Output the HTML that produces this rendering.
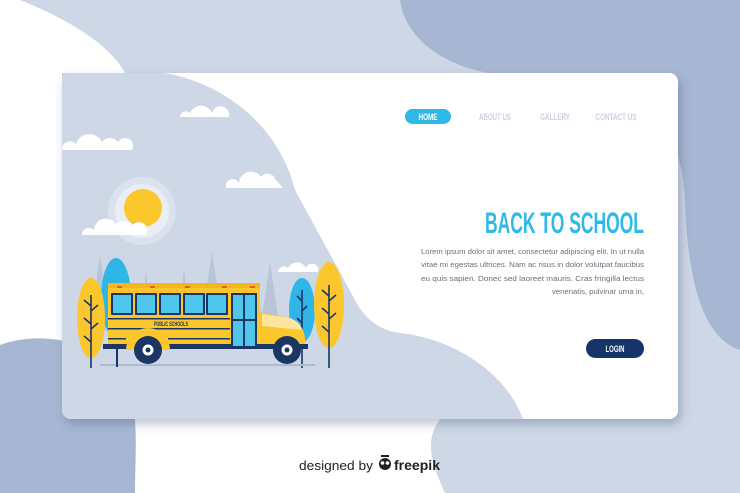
<!DOCTYPE html>
<html><head><meta charset="utf-8"><style>
html,body{margin:0;padding:0;width:740px;height:493px;overflow:hidden;background:#fff}
svg{display:block}
</style></head><body>
<svg width="740" height="493" viewBox="0 0 740 493" xmlns="http://www.w3.org/2000/svg">
<defs>
<filter id="sh" x="-10%" y="-10%" width="120%" height="130%"><feDropShadow dx="3" dy="5" stdDeviation="5" flood-color="#44557a" flood-opacity="0.35"/></filter>
<clipPath id="cc"><rect x="62" y="73" width="616" height="346" rx="9"/></clipPath>
</defs>
<!-- background -->
<rect width="740" height="493" fill="#fff"/>
<path d="M20,0 L740,0 L740,493 L445,493 C430,460 425,440 440,419 L62,419 L62,73 L125,73 C110,45 70,20 20,0 Z" fill="#cdd7e6"/>
<path d="M400,0 C405,40 450,75 520,76 C620,78 680,100 685,200 C688,300 710,340 740,350 L740,0 Z" fill="#a7b6d3"/>
<path d="M0,345 C40,330 100,340 125,380 C140,410 135,450 135,493 L0,493 Z" fill="#a7b6d3"/>
<!-- card -->
<rect x="62" y="73" width="616" height="346" rx="9" fill="#fff" filter="url(#sh)"/>
<g clip-path="url(#cc)">
<rect x="62" y="73" width="616" height="346" fill="#fff"/>
<path d="M62,73 L165,73 C230,85 280,130 295,190 L355,300 C365,320 380,330 400,333 C450,338 505,370 523,419 L62,419 Z" fill="#cdd7e6"/>
<!-- clouds -->
<g fill="#fff">
<path d="M180,117 a6,6 0 0 1 10,-4 a12,12 0 0 1 22,0 a6,6 0 0 1 17,4 Z"/>
<path d="M62,150 a8,8 0 0 1 14,-6 a14,14 0 0 1 26,-2 a10,10 0 0 1 16,0 a8,8 0 0 1 14,8 Z"/>
<path d="M226,188 a7,7 0 0 1 13,-5 a12,12 0 0 1 22,-6 a8,8 0 0 1 14,2 l8,9 Z"/>
<path d="M278,272 a6,6 0 0 1 10,-4 a10,10 0 0 1 18,0 a6,6 0 0 1 12,4 Z"/>
</g>
<!-- sun -->
<circle cx="142" cy="211" r="34" fill="#dbe2ee"/>
<circle cx="142" cy="211" r="27" fill="#e9eef6"/>
<circle cx="143" cy="208" r="19" fill="#fcc72c"/>
<path d="M82,235 a7,7 0 0 1 12,-5 a12,12 0 0 1 22,-6 a10,10 0 0 1 16,2 a6,6 0 0 1 14,9 Z" fill="#fff"/>
<!-- background hills -->
<g fill="#b8c4d8">
<path d="M90,330 L100,255 L110,330 Z"/>
<path d="M200,330 L212,252 L224,330 Z"/>
<path d="M140,330 L146,270 L152,330 Z"/>
<path d="M178,330 L184,268 L190,330 Z"/>
<path d="M150,330 Q170,270 190,330 Z"/>
<path d="M225,330 Q245,258 268,330 Z"/>
<path d="M260,330 L270,262 L280,330 Z"/>
</g>
<!-- trees back -->
<ellipse cx="116" cy="298" rx="15" ry="40" fill="#30b6e6"/>
<ellipse cx="302" cy="310" rx="13" ry="32" fill="#30b6e6"/>
<ellipse cx="91" cy="318" rx="14" ry="40" fill="#fcc72c"/>
<ellipse cx="329" cy="305" rx="15" ry="43" fill="#fcc72c"/>
<g stroke="#1b3565" stroke-width="1.6" fill="none">
<path d="M91,295 V368 M84,300 l7,6 M98,305 l-7,6 M84,318 l7,6 M98,323 l-7,6 M84,336 l7,6"/>
<path d="M329,285 V368 M322,290 l7,6 M336,295 l-7,6 M322,308 l7,6 M336,313 l-7,6 M322,326 l7,6"/>
<path d="M302,290 V368 M297,296 l5,5 M307,306 l-5,5 M297,318 l5,5"/>
</g>
<!-- ground -->
<rect x="100" y="364" width="215" height="2" fill="#aebad0"/>
<!-- bus -->
<g>
<rect x="108" y="283" width="152" height="64" rx="3" fill="#fcc72c"/>
<rect x="108" y="283" width="152" height="5" fill="#f6b41d"/>
<path d="M258,312 L290,318 Q305,325 305,340 L305,348 L258,348 Z" fill="#fcc72c"/>
<path d="M262,314 L290,318 Q300,322 302,330 L262,326 Z" fill="#fde5a0"/>
<rect x="103" y="344" width="205" height="5" fill="#1b3565"/>
<g fill="#1b3565">
<rect x="111" y="293" width="22" height="22" rx="1"/><rect x="135" y="293" width="22" height="22" rx="1"/><rect x="159" y="293" width="22" height="22" rx="1"/><rect x="183" y="293" width="22" height="22" rx="1"/><rect x="206" y="293" width="22" height="22" rx="1"/>
<rect x="231" y="293" width="26" height="55"/>
</g>
<g fill="#4fc6ec">
<rect x="113" y="295" width="18" height="18"/><rect x="137" y="295" width="18" height="18"/><rect x="161" y="295" width="18" height="18"/><rect x="185" y="295" width="18" height="18"/><rect x="208" y="295" width="18" height="18"/>
<rect x="233" y="295" width="10" height="24"/><rect x="245" y="295" width="10" height="24"/>
<rect x="233" y="321" width="10" height="25"/><rect x="245" y="321" width="10" height="25"/>
</g>
<g fill="#1b3565">
<rect x="108" y="318" width="122" height="1.5"/><rect x="108" y="328" width="122" height="1.5"/><rect x="108" y="338" width="18" height="1.5"/><rect x="168" y="338" width="62" height="1.5"/>
</g>
<text x="171" y="326" font-family="Liberation Sans, sans-serif" font-size="6" font-weight="bold" fill="#1b3565" text-anchor="middle" textLength="34" lengthAdjust="spacingAndGlyphs">PUBLIC SCHOOLS</text>
<path d="M126,350 a22,22 0 0 1 44,0 Z" fill="#fcc72c"/>
<circle cx="148" cy="350" r="14" fill="#1b3565"/><circle cx="148" cy="350" r="5.5" fill="#fff"/><circle cx="148" cy="350" r="2.5" fill="#1b3565"/>
<circle cx="287" cy="350" r="14" fill="#1b3565"/><circle cx="287" cy="350" r="5.5" fill="#fff"/><circle cx="287" cy="350" r="2.5" fill="#1b3565"/>
<rect x="116" y="349" width="2" height="18" fill="#1b3565"/>
<g fill="#e0622a"><rect x="117" y="286" width="5" height="2"/><rect x="150" y="286" width="5" height="2"/><rect x="185" y="286" width="5" height="2"/><rect x="222" y="286" width="5" height="2"/><rect x="250" y="286" width="5" height="2"/></g>
</g>
</g>
<!-- nav -->
<rect x="405" y="109" width="46" height="15" rx="7.5" fill="#2ebae9"/>
<g font-family="Liberation Sans, sans-serif" font-size="9" font-weight="bold">
<text x="428" y="120" fill="#fff" text-anchor="middle" textLength="19" lengthAdjust="spacingAndGlyphs">HOME</text>
<text x="495" y="120" fill="#c9d1e0" text-anchor="middle" textLength="32" lengthAdjust="spacingAndGlyphs">ABOUT US</text>
<text x="555" y="120" fill="#c9d1e0" text-anchor="middle" textLength="30" lengthAdjust="spacingAndGlyphs">GALLERY</text>
<text x="616" y="120" fill="#c9d1e0" text-anchor="middle" textLength="41" lengthAdjust="spacingAndGlyphs">CONTACT US</text>
</g>
<text x="644" y="233" font-family="Liberation Sans, sans-serif" font-size="30" font-weight="bold" fill="#2ebae9" text-anchor="end" textLength="159" lengthAdjust="spacingAndGlyphs">BACK TO SCHOOL</text>
<g font-family="Liberation Sans, sans-serif" font-size="7.2" fill="#6b6f7a" text-anchor="end">
<text x="644" y="254" textLength="223" lengthAdjust="spacingAndGlyphs">Lorem ipsum dolor sit amet, consectetur adipiscing elit. In ut nulla</text>
<text x="644" y="267" textLength="223" lengthAdjust="spacingAndGlyphs">vitae mi egestas ultrices. Nam ac risus in dolor volutpat faucibus</text>
<text x="644" y="281" textLength="223" lengthAdjust="spacingAndGlyphs">eu quis sapien. Donec sed laoreet mauris. Cras fringilla lectus</text>
<text x="644" y="294" textLength="92" lengthAdjust="spacingAndGlyphs">venenatis, pulvinar urna in,</text>
</g>
<rect x="586" y="339" width="58" height="19" rx="9.5" fill="#15346a"/>
<text x="615" y="352" font-family="Liberation Sans, sans-serif" font-size="9" font-weight="bold" fill="#fff" text-anchor="middle" textLength="19" lengthAdjust="spacingAndGlyphs">LOGIN</text>
<!-- footer -->
<text x="299" y="470" font-family="Liberation Sans, sans-serif" font-size="13" fill="#222" textLength="74" lengthAdjust="spacingAndGlyphs">designed by</text>
<g fill="#222"><circle cx="385" cy="464" r="6"/><circle cx="382.5" cy="463" r="1.8" fill="#fff"/><circle cx="387.5" cy="463" r="1.8" fill="#fff"/><rect x="381" y="455" width="8" height="2"/></g>
<text x="394" y="470" font-family="Liberation Sans, sans-serif" font-size="14" font-weight="bold" fill="#222" textLength="46" lengthAdjust="spacingAndGlyphs">freepik</text>
</svg>
</body></html>
